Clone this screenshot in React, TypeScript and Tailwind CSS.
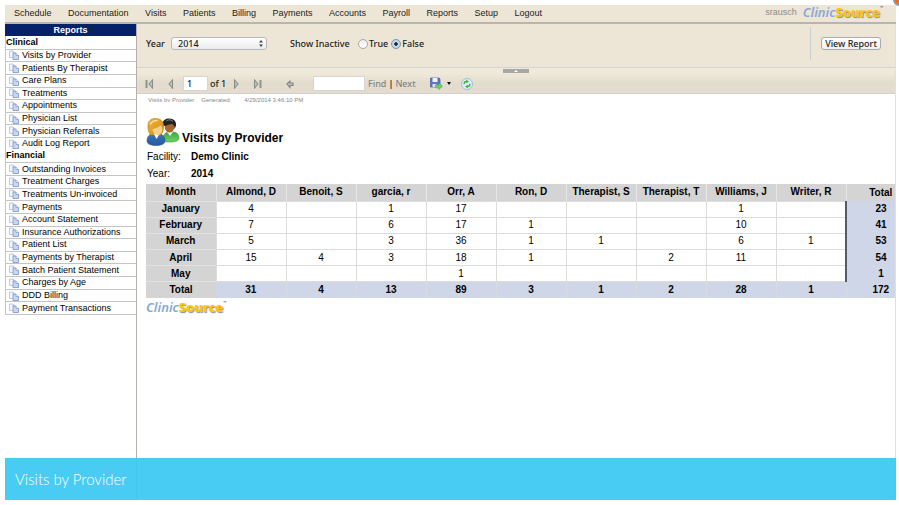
import clsx from "clsx";

const menu = [
  "Schedule",
  "Documentation",
  "Visits",
  "Patients",
  "Billing",
  "Payments",
  "Accounts",
  "Payroll",
  "Reports",
  "Setup",
  "Logout",
];

const reportGroups = [
  {
    title: "Clinical",
    items: [
      "Visits by Provider",
      "Patients By Therapist",
      "Care Plans",
      "Treatments",
      "Appointments",
      "Physician List",
      "Physician Referrals",
      "Audit Log Report",
    ],
  },
  {
    title: "Financial",
    items: [
      "Outstanding Invoices",
      "Treatment Charges",
      "Treatments Un-invoiced",
      "Payments",
      "Account Statement",
      "Insurance Authorizations",
      "Patient List",
      "Payments by Therapist",
      "Batch Patient Statement",
      "Charges by Age",
      "DDD Billing",
      "Payment Transactions",
    ],
  },
];

const providers = [
  "Almond, D",
  "Benoit, S",
  "garcia, r",
  "Orr, A",
  "Ron, D",
  "Therapist, S",
  "Therapist, T",
  "Williams, J",
  "Writer, R",
];

const months = [
  { name: "January", visits: [4, "", 1, 17, "", "", "", 1, ""], total: 23 },
  { name: "February", visits: [7, "", 6, 17, 1, "", "", 10, ""], total: 41 },
  { name: "March", visits: [5, "", 3, 36, 1, 1, "", 6, 1], total: 53 },
  { name: "April", visits: [15, 4, 3, 18, 1, "", 2, 11, ""], total: 54 },
  { name: "May", visits: ["", "", "", 1, "", "", "", "", ""], total: 1 },
];

const totals = [31, 4, 13, 89, 3, 1, 2, 28, 1];

const Logo = () => (
  <span className="flex items-start font-['Noto_Sans'] text-[13px] leading-[14px] whitespace-nowrap">
    <span className="font-semibold text-[#88a9d6] italic">Clinic</span>
    <span className="font-extrabold text-[#fdc60b] [text-shadow:1px_1px_1px_#8b8b8b]">
      Source
    </span>
    <span className="text-[4px] leading-[6px] text-gray-600">™</span>
  </span>
);

const PagesIcon = () => (
  <svg viewBox="0 0 20 20" className="h-[10px] w-[10px] shrink-0">
    <path d="M1 2h7l3 3v10H1z" fill="#f4f8fd" stroke="#a9bfdc" strokeWidth="1.6" />
    <path d="M8 2v4h3" fill="none" stroke="#a9bfdc" strokeWidth="1.4" />
    <path d="M8 6h6l5 5v8H8z" fill="#c9d7f0" stroke="#7c93c4" strokeWidth="1.6" />
    <path d="M14 6v5h5" fill="#fff" stroke="#7c93c4" strokeWidth="1.4" />
  </svg>
);

const PeopleIcon = () => (
  <svg viewBox="0 0 34 30" className="h-[30px] w-[34px]">
    <defs>
      <linearGradient id="hair" x1="0" y1="0" x2="1" y2="1">
        <stop offset="0" stopColor="#f0b53a" />
        <stop offset="1" stopColor="#cf8a1a" />
      </linearGradient>
      <linearGradient id="blue" x1="0" y1="0" x2="0" y2="1">
        <stop offset="0" stopColor="#3f74b8" />
        <stop offset="1" stopColor="#23579f" />
      </linearGradient>
      <linearGradient id="green" x1="0" y1="0" x2="0" y2="1">
        <stop offset="0" stopColor="#3fa545" />
        <stop offset="1" stopColor="#6cd45e" />
      </linearGradient>
    </defs>
    <path d="M17 23c0-5 2-8 6-8h4c4 0 6 3 6 6 0 3-4 4-8 4-3 0-8 0-8-2z" fill="url(#green)" stroke="#38963a" strokeWidth=".6" />
    <path d="M21 15l3 4 3-4z" fill="#f4f9f4" />
    <ellipse cx="23.500" cy="10" rx="4.800" ry="5.500" fill="#a8652e" />
    <path d="M16.500 8c-.5-4 2.500-6.500 6.500-6.500 5 0 7.500 3 7 7l-1.500 4c0-4-1-5-3-5.500-3 1-5 1-7 2z" fill="#222" />
    <path d="M20.500 3.800c2-1.500 5-1.200 6.500.8" stroke="#888" fill="none" />
    <path d="M1 24c0-5 3-7 6-7h6c4 0 6 3 6 7 0 3-4 4.500-9 4.500S1 27 1 24z" fill="url(#blue)" stroke="#2a5796" strokeWidth=".6" />
    <path d="M2 10C1.500 4 5 1.500 9.500 1.500c5.500 0 8.500 3.500 8 8.500 0 4-1 6-3 8H4.500C3 16 2 13 2 10z" fill="url(#hair)" stroke="#b8730c" strokeWidth=".6" />
    <path d="M8 17l2.500 5 3-5z" fill="#fff" />
    <path d="M6.500 12c3-.5 6-1.500 8-3.500 1.500 1 1.800 2 1.800 4 0 3-2 5.500-4.800 5.500s-5-3-5-6z" fill="#f8cf8c" />
    <path d="M4.500 7c1-2 3-3.500 6.500-3.500" stroke="#fbe09a" strokeWidth="1.500" fill="none" strokeLinecap="round" />
  </svg>
);

const ArrowIcon = ({ end, flip }: { end?: boolean; flip?: boolean }) => (
  <svg viewBox="0 0 10 10" className={clsx("h-[10px] w-[10px]", flip && "-scale-x-100")}>
    <path d="M2.500 1v8L6 5z" fill="#c4c4c0" stroke="#8c8c88" strokeWidth="1.100" />
    {end && <path d="M8.500 1v8" stroke="#92928e" strokeWidth="2" />}
  </svg>
);

const BackIcon = () => (
  <svg viewBox="0 0 10 10" className="h-[10px] w-[10px]">
    <path d="M2 5l3-3v2h3v2.500H5v2z" fill="#c0c0bc" stroke="#83837f" strokeWidth="1.100" />
  </svg>
);

const SaveIcon = () => (
  <svg viewBox="0 0 13 13" className="h-[13px] w-[13px]">
    <path d="M.5 1h8.500l1 1v8H.5z" fill="#5f74c6" stroke="#4558a4" strokeWidth=".7" />
    <path d="M2.500 1h5v4h-5z" fill="#eef3ff" />
    <path d="M2.500 7h4v3h-4z" fill="#dfe6fa" />
    <path d="M5 8h4V6l3.500 3.200L9 12.500V11H6z" fill="#6fd068" stroke="#4aa84a" strokeWidth=".6" />
  </svg>
);

const RefreshIcon = () => (
  <svg viewBox="0 0 12 12" className="h-[12px] w-[12px]">
    <circle cx="6" cy="6" r="5.500" fill="#e3effb" stroke="#8fb3d8" strokeWidth=".8" />
    <path d="M3 6.200C3 4.500 4 3.500 5.500 3.500" fill="none" stroke="#35b53b" strokeWidth="1.300" />
    <path d="M5.200 1.600L8 3.500 5.200 5.200z" fill="#35b53b" />
    <path d="M9 5.800c0 1.700-1 2.700-2.500 2.700" fill="none" stroke="#35b53b" strokeWidth="1.300" />
    <path d="M6.800 10.400L4 8.500l2.800-1.700z" fill="#35b53b" />
  </svg>
);

const TopMenu = () => (
  <header className="flex h-[19px] items-center justify-between border-b-2 border-[#bab4ae] bg-[#ede6d6] pr-[13px] pl-[9px]">
    <nav className="flex w-[528px] justify-between text-[9px] text-[#222]">
      {menu.map((item) => (
        <a key={item} href="#">
          {item}
        </a>
      ))}
    </nav>
    <div className="flex items-center gap-[6px] pb-[3px]">
      <span className="text-[9px] leading-3 text-[#8b8b8b]">srausch</span>
      <Logo />
    </div>
  </header>
);

const Sidebar = () => (
  <aside className="w-[132px] shrink-0 border-r border-[#b5b1aa] text-[9px]">
    <h2 className="bg-[#06216a] text-center leading-3 font-bold text-white">Reports</h2>
    <ul className="grid h-[279px] auto-rows-fr border-b border-l border-[#c4c4c4] text-black">
      {reportGroups.map((group) => [
        <li key={group.title} className="flex items-center font-bold">
          {group.title}
        </li>,
        ...group.items.map((item) => (
          <li key={group.title + item} className="flex border-t border-[#c4c4c4]">
            <a href="#" className="flex items-center gap-[3px] pl-[3px] leading-[11px]">
              <PagesIcon />
              {item}
            </a>
          </li>
        )),
      ])}
    </ul>
  </aside>
);

const Parameters = () => (
  <form className="flex h-[44px] items-start border-b border-[#cfd6d8] bg-[#ede6d6] pr-[14px] pl-[9px] font-['Noto_Sans'] text-[9px] font-medium text-[#222]">
    <div className="flex h-[39px] items-center">
      <label htmlFor="year" className="w-[25px]">
        Year
      </label>
      <div className="relative">
        <select
          id="year"
          className="h-[13px] w-[96px] appearance-none rounded-[3px] border border-[#b9b9b9] bg-linear-to-b from-white to-[#ececec] pl-[6px] leading-[11px]"
        >
          <option>2014</option>
        </select>
        <svg viewBox="0 0 4 7" className="pointer-events-none absolute top-[3px] right-[4px] h-[7px] w-[4px]">
          <path d="M2 0l2 2.500H0zM2 7l2-2.500H0z" fill="#444" />
        </svg>
      </div>
      <fieldset className="ml-[23px] flex items-center">
        <legend className="float-left w-[68px]">Show Inactive</legend>
        <label className="flex items-center gap-px">
          <input
            type="radio"
            name="inactive"
            className="h-[10px] w-[10px] appearance-none rounded-full border border-[#aaa] bg-linear-to-b from-[#eee] to-white"
          />
          True
        </label>
        <label className="ml-[3px] flex items-center gap-px">
          <input
            type="radio"
            name="inactive"
            defaultChecked
            className="h-[10px] w-[10px] appearance-none rounded-full border border-[#7e93ad] bg-[radial-gradient(circle,#1c2733_0_25%,#c3d6ea_38%)]"
          />
          False
        </label>
      </fieldset>
    </div>
    <div className="mt-[3px] ml-auto flex h-[33px] items-center border-l border-[#cbd0d3] pl-[10px]">
      <button
        type="button"
        className="h-[13px] w-[60px] rounded-[3px] border border-[#aaa] bg-linear-to-b from-white to-[#f0f0f0] leading-[11px]"
      >
        View Report
      </button>
    </div>
  </form>
);

const Toolbar = () => (
  <div className="flex h-[20px] items-center border-b border-[#d5d1ca] bg-linear-to-b from-[#eee8da] via-[#e2dccd] to-[#e6dcd0] pl-[8px] font-['Noto_Sans'] text-[9px] font-medium text-[#222]">
    <button type="button" aria-label="First page">
      <ArrowIcon end flip />
    </button>
    <button type="button" aria-label="Previous page" className="ml-[10px]">
      <ArrowIcon flip />
    </button>
    <input
      aria-label="Current page"
      defaultValue="1"
      className="ml-[8px] h-[15px] w-[25px] border border-[#d6d6d6] bg-white px-[3px]"
    />
    <span className="w-[24px] pl-[2px]">of 1</span>
    <button type="button" aria-label="Next page">
      <ArrowIcon />
    </button>
    <button type="button" aria-label="Last page" className="ml-[10px]">
      <ArrowIcon end />
    </button>
    <button type="button" aria-label="Back" className="ml-[23px]">
      <BackIcon />
    </button>
    <input
      aria-label="Find text"
      className="ml-[18px] h-[15px] w-[52px] border border-[#d6d6d6] bg-white px-[3px]"
    />
    <div className="flex gap-[2px] pl-[3px] text-[#858585]">
      <button type="button">Find</button>
      <span className="text-black">|</span>
      <button type="button">Next</button>
    </div>
    <button type="button" aria-label="Export" className="ml-[14px] flex items-center gap-1">
      <SaveIcon />
      <svg viewBox="0 0 4 3" className="h-[3px] w-[4px]">
        <path d="M0 0h4L2 3z" fill="#111" />
      </svg>
    </button>
    <button type="button" aria-label="Refresh" className="ml-[10px]">
      <RefreshIcon />
    </button>
  </div>
);

const VisitsTable = () => (
  <table className="h-[114px] w-full table-fixed border-collapse text-center text-[10px] leading-[12px] text-black">
    <colgroup>
      <col className="w-[70px]" />
      {providers.map((provider) => (
        <col key={provider} className="w-[70px]" />
      ))}
      <col />
    </colgroup>
    <thead>
      <tr className="h-[17px] bg-[#d4d4d4]">
        <th className="p-0">Month</th>
        {providers.map((provider) => (
          <th key={provider} className="border-l border-[#e6e6e6] p-0">
            {provider}
          </th>
        ))}
        <th className="border-l border-[#e6e6e6] p-0 pl-5">Total</th>
      </tr>
    </thead>
    <tbody>
      {months.map((month) => (
        <tr key={month.name} className="h-[16px]">
          <th className="border-t border-[#e2e2e2] bg-[#d4d4d4] p-0">{month.name}</th>
          {month.visits.map((count, i) => (
            <td key={providers[i]} className="border border-[#dcdcdc] p-0">
              {count}
            </td>
          ))}
          <td className="border-l-2 border-l-[#555b68] bg-[#ced6e7] p-0 pl-5 font-bold">
            {month.total}
          </td>
        </tr>
      ))}
      <tr className="h-[16px] bg-[#ced6e7] font-bold">
        <th className="border-t border-[#e2e2e2] bg-[#d4d4d4] p-0">Total</th>
        {totals.map((count, i) => (
          <td key={providers[i]} className="border-r border-[#d6dae2] p-0">
            {count}
          </td>
        ))}
        <td className="p-0 pl-5">172</td>
      </tr>
    </tbody>
  </table>
);

const Report = () => (
  <section className="pl-[9px] text-[10px] leading-[12px] text-black">
    <div className="flex h-[8px] gap-[7px] overflow-hidden pt-[2px] pl-[2px] text-[6px] leading-[8px] text-[#888]">
      <span>Visits by Provider</span>
      <span className="w-[36px]">Generated:</span>
      <span>4/29/2014 3:46:10 PM</span>
    </div>
    <div className="mt-[15px] flex items-end gap-[2px]">
      <PeopleIcon />
      <h1 className="pb-px text-[12px] leading-[16px] font-bold">Visits by Provider</h1>
    </div>
    <dl className="mt-[4px] grid grid-cols-[44px_1fr] gap-y-[5px] pl-px">
      <dt>Facility:</dt>
      <dd className="font-bold">Demo Clinic</dd>
      <dt>Year:</dt>
      <dd className="font-bold">2014</dd>
    </dl>
    <div className="mt-[4px]">
      <VisitsTable />
    </div>
    <div className="mt-[2px]">
      <Logo />
    </div>
  </section>
);

export default function App() {
  return (
    <div className="relative h-screen overflow-hidden bg-white py-[5px] pr-[3px] pl-[5px] font-['Liberation_Sans',Arial,sans-serif]">
      <div className="absolute -top-[6px] -right-[6px] h-[12px] w-[12px] rounded-full border-2 border-[#999] bg-[#f06a1d]" />
      <div className="relative flex h-full flex-col">
        <TopMenu />
        <div className="flex min-h-0 flex-1">
          <Sidebar />
          <main className="min-w-0 flex-1 border-r border-[#e0e0e0]">
            <Parameters />
            <div className="flex h-[6px] justify-center bg-[#f0e8d8] pt-px">
              <button
                type="button"
                aria-label="Collapse parameters"
                className="flex h-[4px] w-[26px] items-center justify-center bg-[#a9a7a3]"
              >
                <svg viewBox="0 0 4 2" className="h-[2px] w-[4px]">
                  <path d="M0 2l2-2 2 2z" fill="#fff" />
                </svg>
              </button>
            </div>
            <Toolbar />
            <Report />
          </main>
        </div>
        <div className="absolute inset-x-0 bottom-0 flex h-[42px] items-center bg-[#3ac8f2]/93 pl-[10px] font-[Lato] text-[15px] font-light text-white">
          Visits by Provider
        </div>
      </div>
    </div>
  );
}
